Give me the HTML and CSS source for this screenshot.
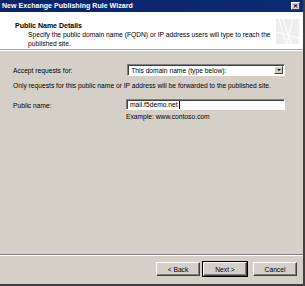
FILE: index.html
```html
<!DOCTYPE html>
<html lang="en">
<head>
  <meta charset="UTF-8" />
  <title>New Exchange Publishing Rule Wizard</title>
  <link rel="stylesheet" href="styles.css">
</head>
<body>
  <div class="window">
    <div class="titlebar">
      <span class="title">New Exchange Publishing Rule Wizard</span>
      <span class="close">&#x2715;</span>
    </div>

    <div class="header">
      <div class="header-text">
        <div class="step">Public Name Details</div>
        <div class="desc">Specify the public domain name (FQDN) or IP address users will type to reach the published site.</div>
      </div>
      <svg class="logo" width="30" height="33" viewBox="0 0 30 33">
        <rect width="30" height="33" fill="#eceef2"/>
        <path d="M4 0 L13 33 M9 0 L20 33 M22 0 L14 33 M0 17 L30 25" stroke="#fff" stroke-width="1.3" fill="none"/>
      </svg>
    </div>

    <div class="content">
      <div class="row">
        <label>Accept requests for:</label>
        <div class="select">
          <span>This domain name (type below):</span>
          <span class="arrow"></span>
        </div>
      </div>
      <p class="note">Only requests for this public name or IP address will be forwarded to the published site.</p>
      <div class="row row-name">
        <label>Public name:</label>
        <div class="field">
          <div class="input">mail.f5demo.net<span class="caret"></span></div>
          <div class="hint">Example: www.contoso.com</div>
        </div>
      </div>
    </div>

    <div class="footer">
      <button>&lt; Back</button>
      <button class="default">Next &gt;</button>
      <button class="cancel">Cancel</button>
    </div>
  </div>
</body>
</html>
```

FILE: styles.css
```css
body{margin:0;font-family:"Liberation Sans",Arial,sans-serif;font-size:6.7px;color:#000}
.window{width:305px;height:286px;box-sizing:border-box;background:#d4d0c8;
        border-right:2px solid #404040;border-bottom:2px solid #404040;
        display:flex;flex-direction:column}
.titlebar{height:12px;background:linear-gradient(90deg,#0a246a,#0e2a74);color:#fff;
          display:flex;align-items:center;justify-content:space-between;padding:0 3px 0 2px}
.title{font-weight:bold;font-size:7.1px}
.close{width:9px;height:8px;background:#d4d0c8;color:#000;font-size:6px;font-weight:bold;
       display:flex;align-items:center;justify-content:center;line-height:1;
       border:1px solid;border-color:#fff #404040 #404040 #fff;box-sizing:border-box}
.header{height:38px;background:#fff;border-bottom:1px solid #a0a0a0;box-shadow:0 1px 0 #fff;
        display:flex;justify-content:space-between;padding:2px 4px 0 15px;box-sizing:border-box}
.header-text{padding-top:8px}
.step{font-weight:bold;font-size:7px;margin-bottom:2px}
.desc{padding-left:13px;width:248px;line-height:8.5px}
.logo{margin-top:1px}
.content{flex:1;padding:14px 18px 0 13px}
.row{display:flex;align-items:center}
.row label{width:115px}
.select{width:159px;height:12px;box-sizing:border-box;background:#fff;
        border:1px solid;border-color:#808080 #fff #fff #808080;box-shadow:inset 1px 1px 0 #404040;
        display:flex;align-items:center;justify-content:space-between;padding-left:3px}
.arrow{width:9px;height:8px;margin-right:1px;background:#d4d0c8;box-sizing:border-box;
       border:1px solid;border-color:#fff #404040 #404040 #fff;position:relative}
.arrow::after{content:"";position:absolute;left:2px;top:2px;border:2px solid transparent;border-top:2px solid #000;border-bottom:0}
.note{margin:6px 0 0}
.row-name{align-items:flex-start;margin-top:10px}
.row-name label{padding-top:3px}
.input{width:159px;height:11px;box-sizing:border-box;background:#fff;
       border:1px solid;border-color:#808080 #fff #fff #808080;box-shadow:inset 1px 1px 0 #404040;
       padding-left:3px;display:flex;align-items:center}
.caret{display:inline-block;width:1px;height:8px;background:#000;margin-left:1px}
.hint{margin-top:3px}
.footer{height:30px;border-top:1px solid #808080;box-shadow:inset 0 1px 0 #fff;
        display:flex;justify-content:flex-end;align-items:flex-start;gap:3px;padding:7px 6px 0 0;box-sizing:border-box}
button{width:44px;height:14px;padding:0;font:inherit;font-size:6.7px;background:#d4d0c8;
       border:1px solid;border-color:#fff #404040 #404040 #fff;box-shadow:inset -1px -1px 0 #808080}
button.default{outline:1px solid #000}
button.cancel{margin-left:3px}
```
